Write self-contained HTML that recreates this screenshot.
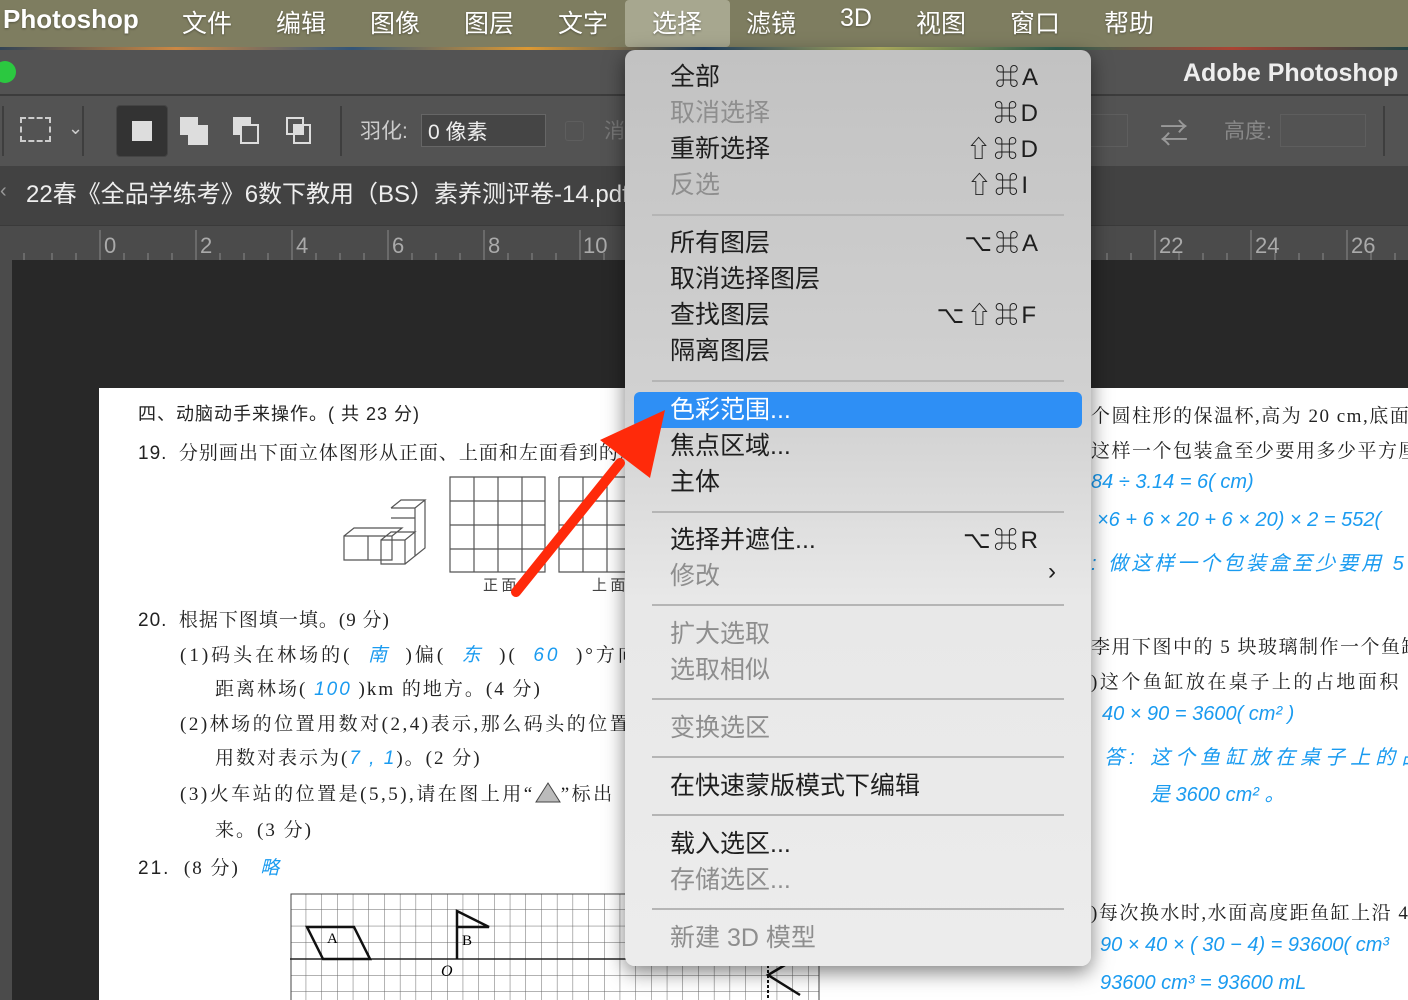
<!DOCTYPE html>
<html><head><meta charset="utf-8">
<style>
*{margin:0;padding:0;box-sizing:border-box}
body{width:1408px;height:1000px;overflow:hidden;position:relative;background:#282828;font-family:"Liberation Sans","Noto Sans CJK SC",sans-serif}
.a{position:absolute;white-space:nowrap}
.mb{top:0;left:0;width:1408px;height:47px;background:#7e7d60}
.mb span{position:absolute;top:4px;font-size:25px;color:#fff;text-shadow:0 1px 2px rgba(0,0,0,.35)}
.doc{font-family:"Liberation Serif","Noto Serif CJK SC",serif;color:#222;font-size:19px;letter-spacing:1px}
.blue{color:#1a9bf0;font-style:italic;font-family:"Liberation Sans","Noto Sans CJK SC",sans-serif}
.menu{left:625px;top:50px;width:466px;height:916px;border-radius:10px;background:linear-gradient(#c2c2c2 0%,#d2d2d2 40%,#e8e8e8 60%,#ececec 100%);box-shadow:0 6px 20px rgba(0,0,0,.5)}
.mi{position:absolute;left:45px;font-size:25px;color:#1e1e1e;font-family:"Liberation Sans","Noto Sans CJK SC",sans-serif;margin-top:-4px}
.dis{color:#8e8e8e}
.sc{position:absolute;right:50px;font-size:24px;color:#1e1e1e;margin-top:-4px;letter-spacing:3px}
.sep{position:absolute;left:27px;width:412px;height:2px;background:#b5b5b5}
.rn{position:absolute;top:233px;font-size:22px;color:#aaa}
</style></head><body>
<div class="a mb">
<span style="left:3px;font-weight:bold;font-size:26px">Photoshop</span>
<span style="left:182px">文件</span><span style="left:276px">编辑</span><span style="left:370px">图像</span><span style="left:464px">图层</span><span style="left:558px">文字</span>
<div style="position:absolute;left:625px;top:0;width:105px;height:47px;background:#a7a78f;border-radius:4px"></div>
<span style="left:652px">选择</span><span style="left:746px">滤镜</span><span style="left:840px">3D</span><span style="left:916px">视图</span><span style="left:1010px">窗口</span><span style="left:1104px">帮助</span>
</div>
<div class="a" style="top:47px;left:0;width:1408px;height:3px;background:linear-gradient(90deg,#345,#c84,#357,#d93,#246,#bb6,#365,#a43,#244)"></div>
<div class="a" style="top:50px;left:0;width:1408px;height:45px;background:#535353"></div>
<div class="a" style="top:61px;left:-6px;width:22px;height:22px;border-radius:50%;background:#2bc840"></div>
<div class="a" style="top:59px;left:1183px;color:#eee;font-weight:bold;font-size:25px">Adobe Photoshop</div>
<div class="a" style="top:94px;left:0;width:1408px;height:2px;background:#3c3c3c"></div>
<div class="a" style="top:96px;left:0;width:1408px;height:70px;background:#535353"></div>
<div class="a" style="top:106px;left:2px;width:2px;height:50px;background:#3e3e3e"></div>
<div class="a" style="top:117px;left:20px;width:31px;height:25px;border:2px dashed #ccc"></div>
<div class="a" style="top:118px;left:68px;color:#ccc;font-size:18px">⌄</div>
<div class="a" style="top:106px;left:82px;width:2px;height:50px;background:#3e3e3e"></div>
<div class="a" style="top:105px;left:116px;width:52px;height:52px;background:#333;border:1px solid #444;border-radius:4px"></div>
<div class="a" style="top:121px;left:132px;width:20px;height:20px;background:#ddd"></div>
<div class="a" style="top:117px;left:180px;width:18px;height:18px;background:#ddd"></div>
<div class="a" style="top:125px;left:188px;width:20px;height:20px;background:#ddd"></div>
<div class="a" style="top:117px;left:233px;width:18px;height:18px;background:#ddd"></div>
<div class="a" style="top:124px;left:240px;width:19px;height:20px;border:2px solid #ddd;background:#535353"></div>
<div class="a" style="top:117px;left:286px;width:18px;height:18px;border:2px solid #ddd"></div>
<div class="a" style="top:124px;left:293px;width:18px;height:20px;border:2px solid #ddd"></div>
<div class="a" style="top:124px;left:293px;width:11px;height:11px;background:#ddd"></div>
<div class="a" style="top:106px;left:340px;width:2px;height:50px;background:#3e3e3e"></div>
<div class="a" style="top:115px;left:360px;color:#ccc;font-size:21px">羽化:</div>
<div class="a" style="top:114px;left:421px;width:125px;height:33px;background:#454545;border:1px solid #666;color:#eee;font-size:21px;padding:1px 6px">0 像素</div>
<div class="a" style="top:121px;left:565px;width:19px;height:20px;border:1px solid #5e5e5e;border-radius:3px"></div>
<div class="a" style="top:115px;left:604px;color:#777;font-size:21px">消</div>
<div class="a" style="top:114px;left:1080px;width:48px;height:33px;border:1px solid #5e5e5e"></div>
<div class="a" style="top:112px;left:1160px;color:#999;font-size:28px">⇄</div>
<div class="a" style="top:115px;left:1224px;color:#888;font-size:21px">高度:</div>
<div class="a" style="top:114px;left:1280px;width:86px;height:33px;border:1px solid #5e5e5e"></div>
<div class="a" style="top:106px;left:1383px;width:2px;height:50px;background:#3e3e3e"></div>
<div class="a" style="top:166px;left:0;width:1408px;height:59px;background:#424242"></div>
<div class="a" style="top:180px;left:0;color:#999;font-size:20px">‹</div>
<div class="a" style="top:174px;left:26px;color:#eee;font-size:24px">22春《全品学练考》6数下教用（BS）素养测评卷-14.pdf</div>
<div class="a" style="top:225px;left:0;width:1408px;height:35px;background:#4b4b4b;border-top:1px solid #3a3a3a"></div>
<svg class="a" style="top:226px;left:0" width="1408" height="34">
<g stroke="#888" stroke-width="1">
<line x1="100" y1="4" x2="100" y2="34"/><line x1="196" y1="4" x2="196" y2="34"/><line x1="292" y1="4" x2="292" y2="34"/><line x1="388" y1="4" x2="388" y2="34"/><line x1="484" y1="4" x2="484" y2="34"/><line x1="580" y1="4" x2="580" y2="34"/><line x1="1155" y1="4" x2="1155" y2="34"/><line x1="1251" y1="4" x2="1251" y2="34"/><line x1="1347" y1="4" x2="1347" y2="34"/>
<path d="M24 27v7M52 27v7M76 27v7M124 27v7M148 27v7M172 27v7M220 27v7M244 27v7M268 27v7M316 27v7M340 27v7M364 27v7M412 27v7M436 27v7M460 27v7M508 27v7M532 27v7M556 27v7M604 27v7M1107 27v7M1131 27v7M1179 27v7M1203 27v7M1227 27v7M1275 27v7M1299 27v7M1323 27v7M1371 27v7M1395 27v7"/>
</g></svg>
<span class="rn" style="left:104px">0</span><span class="rn" style="left:200px">2</span><span class="rn" style="left:296px">4</span><span class="rn" style="left:392px">6</span><span class="rn" style="left:488px">8</span><span class="rn" style="left:583px">10</span><span class="rn" style="left:1159px">22</span><span class="rn" style="left:1255px">24</span><span class="rn" style="left:1351px">26</span>
<div class="a" style="top:260px;left:0;width:12px;height:740px;background:#4b4b4b"></div>
<div class="a" style="top:260px;left:12px;width:1396px;height:740px;background:#282828"></div>
<div class="a" style="top:388px;left:99px;width:1309px;height:612px;background:#fff"></div>

<div class="a doc" style="top:400px;left:138px;font-family:'Liberation Sans','Noto Sans CJK SC',sans-serif;font-size:18px">四、动脑动手来操作。( 共 23 分)</div>
<div class="a doc" style="top:438px;left:138px"><span style="font-family:'Liberation Sans',sans-serif">19.</span>&nbsp; 分别画出下面立体图形从正面、上面和左面看到的形</div>
<svg class="a" style="top:474px;left:340px" width="290" height="125">
<g fill="none" stroke="#555" stroke-width="1.2">
<path d="M4 62h24v24H4zM28 62h24v24H28zM4 62l10-8h48l-10 8M52 62v24M41 66h24v24H41zM41 66l10-8h24l-10 8M65 90l10-8V58M51 44h24v22M51 34h24v24H51M51 34l10-8h24l-10 8M85 26v48l-10 8"/>
<path d="M110 3h95v95h-95zM134 3v95M158 3v95M182 3v95M110 27h95M110 51h95M110 75h95"/>
<path d="M219 3h70M219 3v95h70M243 3v95M267 3v95M219 27h70M219 51h70M219 75h70"/>
</g>
<text x="143" y="116" font-size="15" fill="#444" font-family="Noto Sans CJK SC">正 面</text>
<text x="252" y="116" font-size="15" fill="#444" font-family="Noto Sans CJK SC">上 面</text>
</svg>
<div class="a doc" style="top:605px;left:138px"><span style="font-family:'Liberation Sans',sans-serif">20.</span>&nbsp; 根据下图填一填。(9 分)</div>
<div class="a doc" style="top:640px;left:180px;letter-spacing:3px">(1)码头在林场的( &nbsp;<span class="blue">南</span>&nbsp; )偏( &nbsp;<span class="blue">东</span>&nbsp; )( &nbsp;<span class="blue">60</span>&nbsp; )°方向,</div>
<div class="a doc" style="top:674px;left:215px;letter-spacing:2px">距离林场( <span class="blue">100</span> )km 的地方。(4 分)</div>
<div class="a doc" style="top:709px;left:180px;letter-spacing:2.5px">(2)林场的位置用数对(2,4)表示,那么码头的位置</div>
<div class="a doc" style="top:743px;left:215px;letter-spacing:2px">用数对表示为(<span class="blue">7 , 1</span>)。(2 分)</div>
<div class="a doc" style="top:779px;left:180px;letter-spacing:2.5px">(3)火车站的位置是(5,5),请在图上用“<svg width="26" height="22" style="vertical-align:-3px"><path d="M13 2L25 21H1z" fill="#bbb" stroke="#444"/></svg>”标出</div>
<div class="a doc" style="top:815px;left:215px;letter-spacing:2px">来。(3 分)</div>
<div class="a doc" style="top:853px;left:138px;letter-spacing:2px"><span style="font-family:'Liberation Sans',sans-serif">21.</span>&nbsp; (8 分) &nbsp; <span class="blue">略</span></div>
<svg class="a" style="top:893px;left:290px" width="530" height="107">
<defs><pattern id="g" width="15.7" height="16.4" patternUnits="userSpaceOnUse"><path d="M0 0H15.7M0 0V16.4" stroke="#666" stroke-width="1" fill="none"/></pattern></defs>
<rect x="1" y="1" width="528" height="110" fill="url(#g)" stroke="#444"/>
<line x1="0" y1="66" x2="530" y2="66" stroke="#222" stroke-width="1.5"/>
<path d="M17 34h47l16 32H33z" fill="none" stroke="#111" stroke-width="2.5"/>
<text x="37" y="50" font-size="15" font-family="Liberation Serif">A</text>
<path d="M167 66V18l32 16h-32" fill="none" stroke="#111" stroke-width="2.5"/>
<text x="172" y="52" font-size="15" font-family="Liberation Serif">B</text>
<text x="151" y="83" font-size="16" font-style="italic" font-family="Liberation Serif">O</text>
<path d="M495 72l-17 10 32 20" fill="none" stroke="#111" stroke-width="2.5"/>
<line x1="478" y1="72" x2="478" y2="107" stroke="#111" stroke-width="2" stroke-dasharray="3 2"/>
</svg>

<div class="a doc" style="top:401px;left:1091px;letter-spacing:1.5px">个圆柱形的保温杯,高为 20 cm,底面</div>
<div class="a doc" style="top:436px;left:1091px;letter-spacing:1.5px">这样一个包装盒至少要用多少平方厘</div>
<div class="a blue" style="top:471px;left:1091px;font-size:20px">84 ÷ 3.14 = 6( cm)</div>
<div class="a blue" style="top:509px;left:1097px;font-size:20px">×6 + 6 × 20 + 6 × 20) × 2 = 552(</div>
<div class="a blue" style="top:547px;left:1091px;font-size:20px;letter-spacing:3px">: 做这样一个包装盒至少要用 5</div>
<div class="a doc" style="top:632px;left:1091px;letter-spacing:1.5px">李用下图中的 5 块玻璃制作一个鱼缸</div>
<div class="a doc" style="top:667px;left:1091px;letter-spacing:2.5px">)这个鱼缸放在桌子上的占地面积</div>
<div class="a blue" style="top:703px;left:1102px;font-size:20px">40 × 90 = 3600( cm² )</div>
<div class="a blue" style="top:741px;left:1104px;font-size:20px;letter-spacing:5px">答: 这个鱼缸放在桌子上的占</div>
<div class="a blue" style="top:778px;left:1150px;font-size:20px">是 3600 cm² 。</div>
<div class="a doc" style="top:898px;left:1091px;letter-spacing:1.5px">)每次换水时,水面高度距鱼缸上沿 4</div>
<div class="a blue" style="top:934px;left:1100px;font-size:20px">90 × 40 × ( 30 − 4) = 93600( cm³</div>
<div class="a blue" style="top:972px;left:1100px;font-size:20px">93600 cm³ = 93600 mL</div>

<div class="a menu">
<div class="mi" style="top:11px">全部</div><div class="sc" style="top:11px">⌘A</div>
<div class="mi dis" style="top:47px">取消选择</div><div class="sc dis" style="top:47px">⌘D</div>
<div class="mi" style="top:83px">重新选择</div><div class="sc" style="top:83px">⇧⌘D</div>
<div class="mi dis" style="top:119px">反选</div><div class="sc dis" style="top:119px;right:60px">⇧⌘I</div>
<div class="sep" style="top:164px"></div>
<div class="mi" style="top:177px">所有图层</div><div class="sc" style="top:177px">⌥⌘A</div>
<div class="mi" style="top:213px">取消选择图层</div>
<div class="mi" style="top:249px">查找图层</div><div class="sc" style="top:249px;right:52px">⌥⇧⌘F</div>
<div class="mi" style="top:285px">隔离图层</div>
<div class="sep" style="top:330px"></div>
<div style="position:absolute;left:9px;top:342px;width:448px;height:36px;border-radius:6px;background:#2e8ff5"></div>
<div class="mi" style="top:344px;color:#fff">色彩范围...</div>
<div class="mi" style="top:380px">焦点区域...</div>
<div class="mi" style="top:416px">主体</div>
<div class="sep" style="top:461px"></div>
<div class="mi" style="top:474px">选择并遮住...</div><div class="sc" style="top:474px">⌥⌘R</div>
<div class="mi dis" style="top:510px">修改</div><div class="sc dis" style="top:512px;right:32px">›</div>
<div class="sep" style="top:554px"></div>
<div class="mi dis" style="top:568px">扩大选取</div>
<div class="mi dis" style="top:604px">选取相似</div>
<div class="sep" style="top:648px"></div>
<div class="mi dis" style="top:662px">变换选区</div>
<div class="sep" style="top:706px"></div>
<div class="mi" style="top:720px">在快速蒙版模式下编辑</div>
<div class="sep" style="top:764px"></div>
<div class="mi" style="top:778px">载入选区...</div>
<div class="mi dis" style="top:814px">存储选区...</div>
<div class="sep" style="top:858px"></div>
<div class="mi dis" style="top:872px">新建 3D 模型</div>
</div>

<svg class="a" style="top:0;left:0;pointer-events:none" width="1408" height="1000">
<line x1="516" y1="592" x2="620" y2="463" stroke="#ff2a0a" stroke-width="10" stroke-linecap="round"/>
<polygon points="600,440 665,410 650,478" fill="#ff2a0a"/>
</svg>
</body></html>
